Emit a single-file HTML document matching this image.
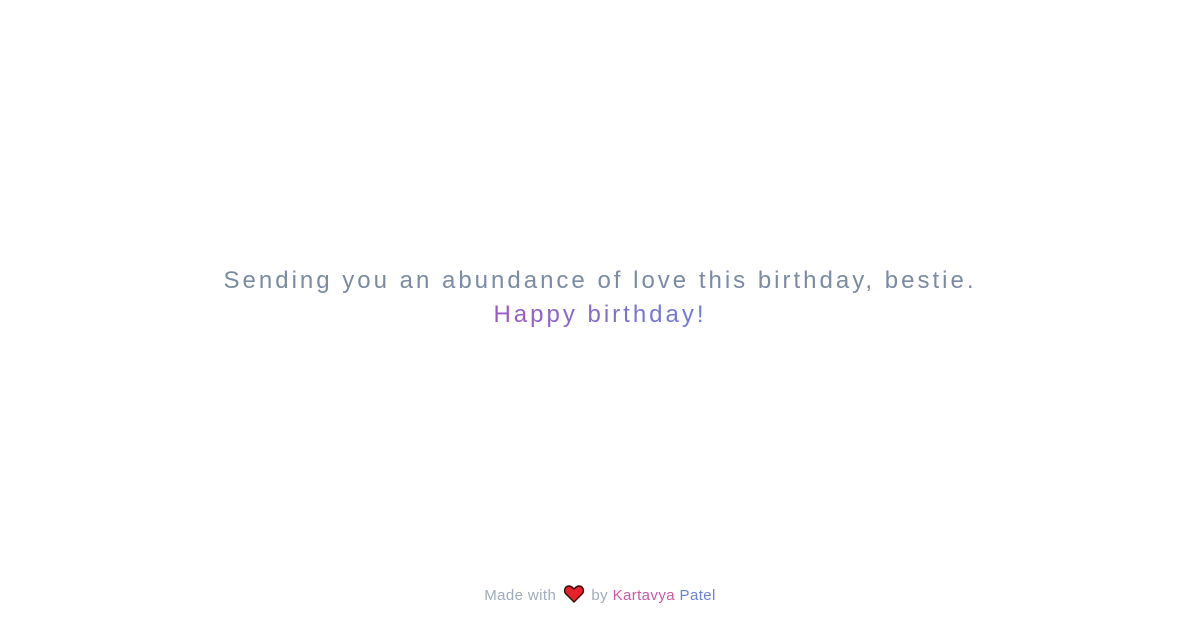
<!DOCTYPE html>
<html><head><meta charset="utf-8"><style>
html,body{margin:0;padding:0;background:#fff;width:1200px;height:630px;overflow:hidden;font-family:"Liberation Sans",sans-serif;}
.l1{position:absolute;top:267px;left:0;width:1200px;text-align:center;font-size:24px;letter-spacing:3px;color:#7b8ba3;white-space:nowrap;}
.l2{position:absolute;top:301px;left:0;width:1200px;text-align:center;font-size:24px;letter-spacing:3px;white-space:nowrap;}
.l2 span{background:linear-gradient(90deg,#9b59c6,#6b7fd0);-webkit-background-clip:text;background-clip:text;color:transparent;}
.f{position:absolute;top:585px;left:0;width:1200px;text-align:center;font-size:15px;letter-spacing:0.4px;color:#a0abbd;white-space:nowrap;}
.f svg{vertical-align:-3px;margin:0 3px;}
.k{color:#c85aa8}.p{color:#6a85d8}
</style></head><body>
<div class="l1">Sending you an abundance of love this birthday, bestie.</div>
<div class="l2"><span>Happy birthday!</span></div>
<div class="f">Made with <svg width="20" height="18" viewBox="0 0 20 18"><path d="M10 17 L2 9 C-1 6 1 1 5 1 C7.5 1 9 3 10 4 C11 3 12.5 1 15 1 C19 1 21 6 18 9 Z" fill="#e8202a" stroke="#3a0a0a" stroke-width="1.4"/></svg> by <span class="k">Kartavya</span> <span class="p">Patel</span></div>
</body></html>
